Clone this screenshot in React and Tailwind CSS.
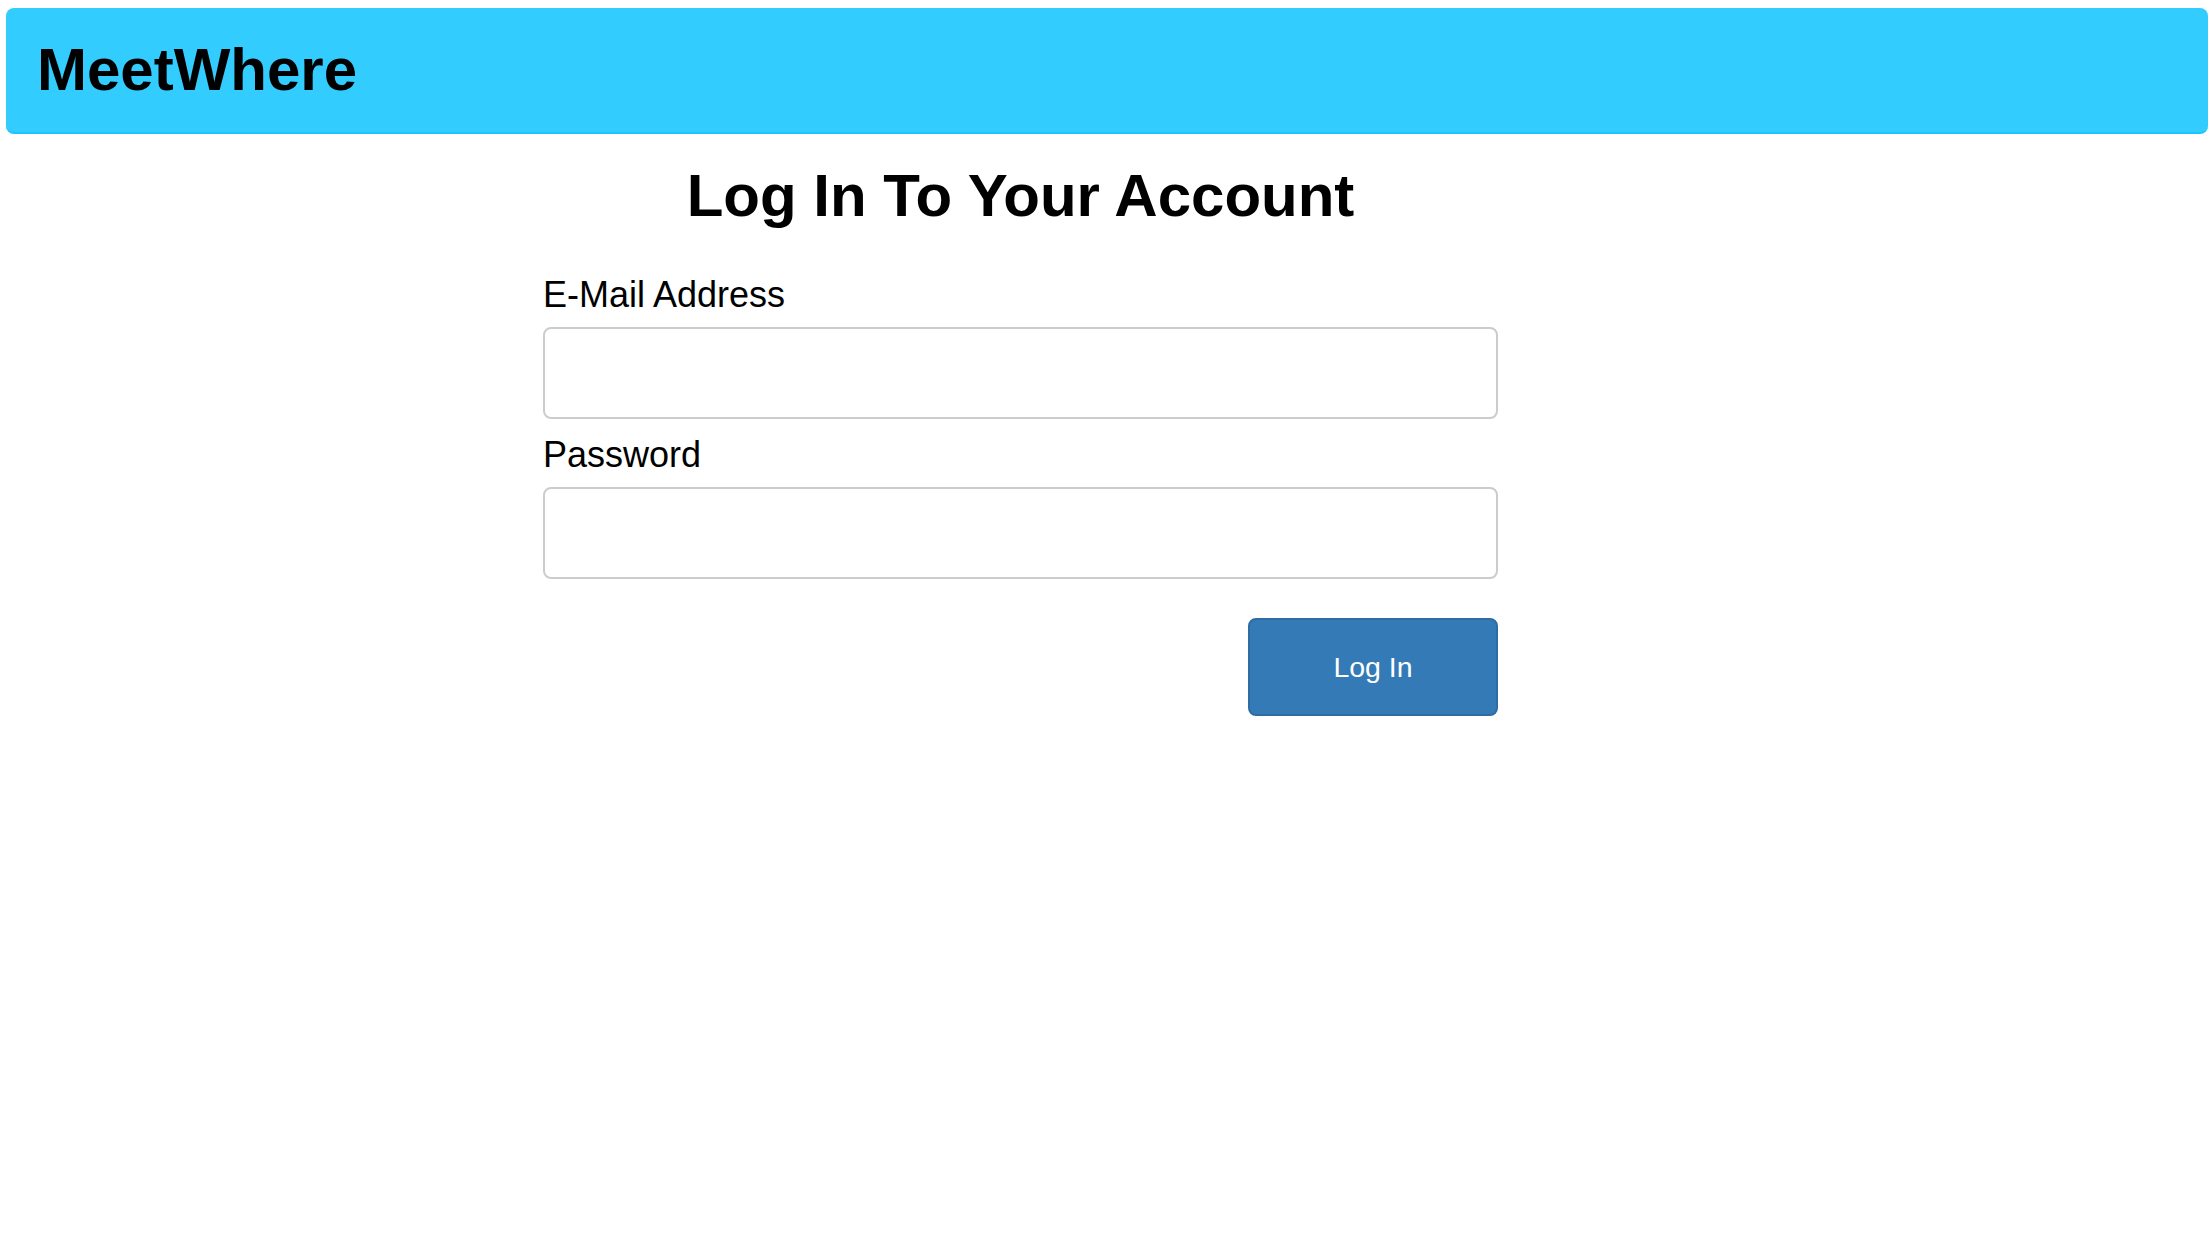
export default function App() {
  return (
    <div className="min-h-screen bg-white pt-[8px] font-['Liberation_Sans',Arial,sans-serif] text-black">
      <header className="ml-[6px] mr-[4px] h-[126px] rounded-[8px] border-b-2 border-[#1ec3ff] bg-[#33ccff] pl-[31px] pt-[32px]">
        <h1 className="text-[60px] font-bold leading-none">MeetWhere</h1>
      </header>

      <main className="ml-[543px] w-[955px] pt-[32px]">
        <h2 className="text-center text-[60px] font-bold leading-none">Log In To Your Account</h2>

        <form className="mt-[51px] flex flex-col" onSubmit={(e) => e.preventDefault()}>
          <label htmlFor="email" className="mb-[14px] block text-[36px] leading-none">
            E-Mail Address
          </label>
          <input
            id="email"
            type="email"
            className="h-[92px] w-full rounded-[8px] border-2 border-[#cccccc] bg-white px-4 text-[30px] outline-none"
          />

          <label htmlFor="password" className="mb-[14px] mt-[18px] block text-[36px] leading-none">
            Password
          </label>
          <input
            id="password"
            type="password"
            className="h-[92px] w-full rounded-[8px] border-2 border-[#cccccc] bg-white px-4 text-[30px] outline-none"
          />

          <div className="mt-[39px] flex justify-end">
            <button
              type="submit"
              className="flex h-[98px] w-[250px] items-center justify-center rounded-[8px] border-2 border-[#2e6da4] bg-[#337ab7] text-[28.5px] text-white"
            >
              Log In
            </button>
          </div>
        </form>
      </main>
    </div>
  );
}
